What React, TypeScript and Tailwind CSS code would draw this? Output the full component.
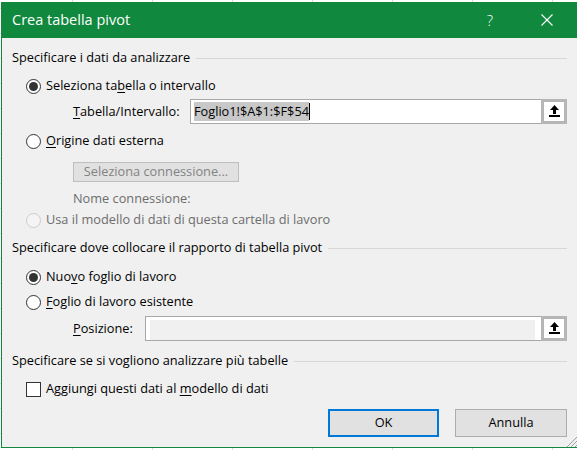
import React from "react";

function Radio({ checked = false, disabled = false }: { checked?: boolean; disabled?: boolean }) {
  return (
    <span
      className={`flex h-[15px] w-[15px] shrink-0 items-center justify-center rounded-full border ${
        disabled ? "border-[#cccccc] bg-[#f4f4f4]" : "border-[#333333] bg-white"
      }`}
    >
      {checked && <span className="h-[9px] w-[9px] rounded-full bg-[#333333]" />}
    </span>
  );
}

function U({ children }: { children: React.ReactNode }) {
  return <span className="underline underline-offset-[2px] decoration-1">{children}</span>;
}

function UploadIcon() {
  return (
    <svg width="11" height="13" viewBox="0 0 11 13" className="block">
      <polygon points="5.5,0 1,5 10,5" fill="#000" />
      <rect x="4" y="5" width="3" height="4" fill="#000" />
      <rect x="0" y="10" width="11" height="2" fill="#000" />
    </svg>
  );
}

function RefButton() {
  return (
    <div className="flex h-[25px] w-[26px] shrink-0 items-center justify-center border-[3px] border-[#b6b6b6] bg-white">
      <UploadIcon />
    </div>
  );
}

function Heading({ text, mt }: { text: string; mt: string }) {
  return (
    <div className={`${mt} flex h-[16px] items-center`}>
      <span className="whitespace-nowrap">{text}</span>
      <span className="ml-[6px] h-px flex-1 bg-[#d7d7d7]" />
    </div>
  );
}

export default function App() {
  return (
    <div className="relative h-[450px] w-[577px] overflow-hidden bg-white bg-[linear-gradient(to_right,#dadada_1px,transparent_1px),linear-gradient(to_bottom,#dadada_1px,transparent_1px)] bg-[length:80px_25px] bg-[position:72px_8px] pl-[1px] pt-[2px] font-['Open_Sans',sans-serif] text-[12.75px] text-black">
      <div className="relative flex h-[446px] w-[576px] flex-col border-b border-l border-[#10893e] bg-[#f0f0f0]">
        {/* Title bar */}
        <div className="flex h-[36px] shrink-0 items-center bg-[#10893e] pl-[10px] pr-[20px] text-white">
          <span className="flex-1 text-[14.5px]">Crea tabella pivot</span>
          <span className="w-[20px] text-center text-[15px] font-light">?</span>
          <span className="ml-[37px] flex w-[20px] items-center justify-center">
            <svg width="12" height="12" viewBox="0 0 12 12">
              <path d="M0.5 0.5 L11.5 11.5 M11.5 0.5 L0.5 11.5" stroke="#fff" strokeWidth="1.1" />
            </svg>
          </span>
        </div>

        {/* Body */}
        <div className="flex flex-1 flex-col pl-[10px] pr-[10px]">
          <Heading text="Specificare i dati da analizzare" mt="mt-[12px]" />

          <div className="mt-[12px] flex h-[16px] items-center pl-[14px]">
            <Radio checked />
            <span className="ml-[5px]">
              Seleziona ta<U>b</U>ella o intervallo
            </span>
          </div>

          <div className="mt-[5px] flex h-[25px] items-center pl-[61px]">
            <span className="w-[117px] shrink-0">
              <U>T</U>abella/Intervallo:
            </span>
            <div className="flex h-[25px] flex-1 items-center border-y border-l border-[#a8a8a8] bg-white pl-[3px]">
              <span className="bg-[#c8c8c8] leading-[19px]">Foglio1!$A$1:$F$54</span>
              <span className="h-[17px] w-px bg-black" />
            </div>
            <RefButton />
          </div>

          <div className="mt-[9px] flex h-[16px] items-center pl-[14px]">
            <Radio />
            <span className="ml-[5px]">
              <U>O</U>rigine dati esterna
            </span>
          </div>

          <div className="mt-[13px] flex h-[20px] pl-[61px]">
            <div className="flex h-[20px] w-[166px] items-center justify-center border border-[#bfbfbf] bg-[#e1e1e1] text-[#838383]">
              Seleziona connessione...
            </div>
          </div>

          <div className="mt-[9px] flex h-[16px] items-center pl-[61px] text-[#6d6d6d]">Nome connessione:</div>

          <div className="mt-[5px] flex h-[16px] items-center pl-[14px] text-[#6d6d6d]">
            <Radio disabled />
            <span className="ml-[5px]">Usa il modello di dati di questa cartella di lavoro</span>
          </div>

          <Heading text="Specificare dove collocare il rapporto di tabella pivot" mt="mt-[12px]" />

          <div className="mt-[13px] flex h-[16px] items-center pl-[14px]">
            <Radio checked />
            <span className="ml-[5px]">
              Nuo<U>v</U>o foglio di lavoro
            </span>
          </div>

          <div className="mt-[9px] flex h-[16px] items-center pl-[14px]">
            <Radio />
            <span className="ml-[5px]">
              <U>F</U>oglio di lavoro esistente
            </span>
          </div>

          <div className="mt-[6px] flex h-[25px] items-center pl-[61px]">
            <span className="w-[72px] shrink-0">
              <U>P</U>osizione:
            </span>
            <div className="flex h-[25px] flex-1 border-y border-l border-[#a8a8a8]">
              <div className="flex-1 border-b-0 border-l-[4px] border-r-[6px] border-t-[3px] border-white bg-[#f0f0f0]" />
            </div>
            <RefButton />
          </div>

          <Heading text="Specificare se si vogliono analizzare più tabelle" mt="mt-[12px]" />

          <div className="mt-[12px] flex h-[16px] items-center pl-[14px]">
            <span className="h-[15px] w-[15px] shrink-0 border border-[#333333] bg-white" />
            <span className="ml-[5px]">
              Aggiungi questi dati al <U>m</U>odello di dati
            </span>
          </div>

          <div className="mt-[12px] flex h-[28px] justify-end gap-[16px]">
            <div className="flex h-[28px] w-[111px] items-center justify-center border-2 border-[#0078d7] bg-[#e1e1e1]">
              OK
            </div>
            <div className="flex h-[28px] w-[112px] items-center justify-center border border-[#adadad] bg-[#e1e1e1]">
              Annulla
            </div>
          </div>
        </div>

        {/* Resize grip */}
        <svg
          width="11"
          height="11"
          viewBox="0 0 11 11"
          className="absolute bottom-0 right-0"
        >
          <path d="M11 1 L1 11 M11 5 L5 11 M11 9 L9 11" stroke="#a0a0a0" strokeWidth="1" />
        </svg>
      </div>
    </div>
  );
}
